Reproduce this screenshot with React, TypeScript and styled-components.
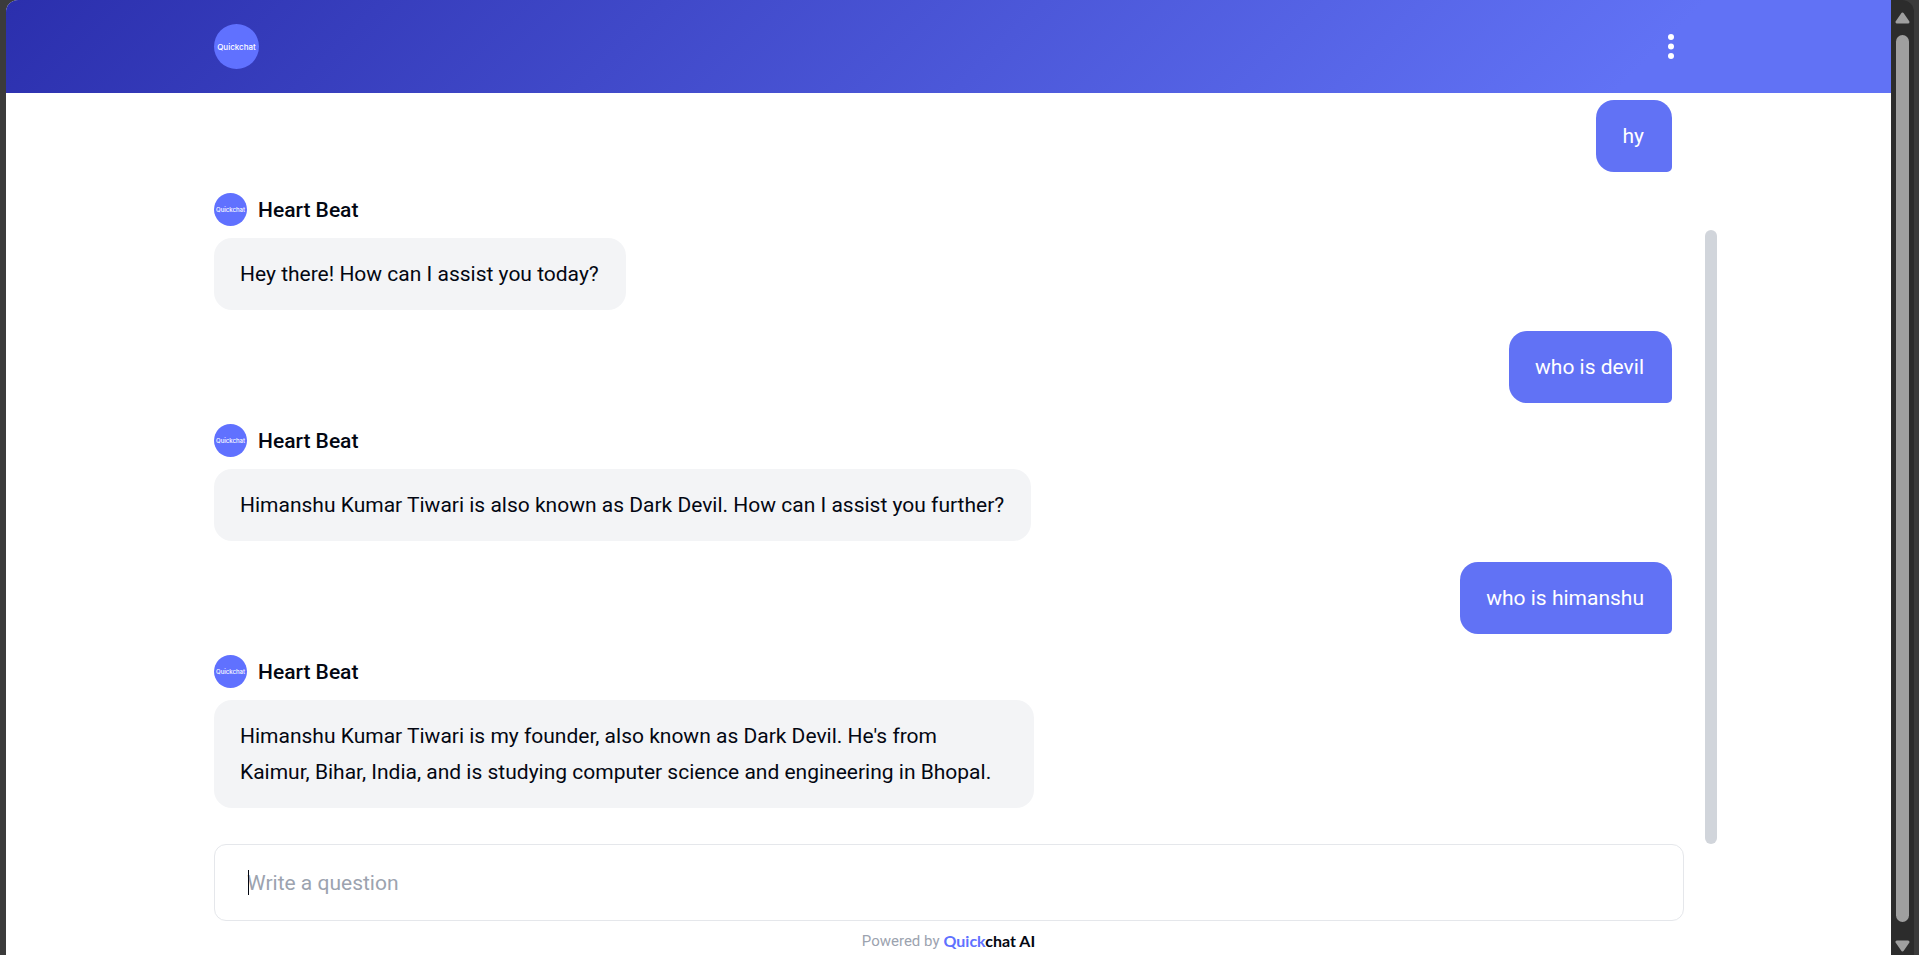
import React from "react";
import styled, { createGlobalStyle } from "styled-components";

const GlobalStyle = createGlobalStyle`
  * { box-sizing: border-box; }
  body {
    margin: 0;
    background: #3b3b3b;
    color: #030712;
    font-family: Roboto, "Liberation Sans", sans-serif;
    font-size: 21px;
    line-height: 36px;
  }
`;

const Shell = styled.div`
  display: flex;
  height: 100vh;
  overflow: hidden;
  padding: 0 5px 0 6px;
`;

const Panel = styled.div`
  flex: 1;
  min-width: 0;
  display: flex;
  flex-direction: column;
  background: #fff;
  border-top-left-radius: 12px;
  overflow: hidden;
`;

const Columns = styled.div`
  display: grid;
  grid-template-columns: minmax(0, 1fr) minmax(0, 1470px) minmax(0, 1fr);
  padding-left: 1px;
`;

const Header = styled.header`
  background: linear-gradient(135deg, #2b2fad 0%, #6172f5 86%);
`;

const HeaderContent = styled.div`
  grid-column: 2;
  display: flex;
  align-items: center;
  justify-content: space-between;
  padding: 24px 0;
`;

const Avatar = styled.span<{ $size: number; $text: number }>`
  display: flex;
  align-items: center;
  justify-content: center;
  width: ${(p) => p.$size}px;
  height: ${(p) => p.$size}px;
  border-radius: 50%;
  background: #6071ff;
  color: #fff;
  font: 500 ${(p) => p.$text}px Inter, sans-serif;
`;

const MenuButton = styled.button`
  display: flex;
  justify-content: center;
  width: 27px;
  padding: 0;
  border: 0;
  background: none;
  cursor: pointer;
`;

const ChatArea = styled(Columns)`
  flex: 1;
  min-height: 0;
`;

const Messages = styled.main`
  grid-column: 2;
  min-height: 0;
  display: flex;
  flex-direction: column;
  justify-content: flex-end;
  gap: 21px;
  padding: 0 12px 36px 0;
  overflow: hidden;
`;

const Bubble = styled.p`
  margin: 0;
  max-width: 820px;
  padding: 18px 27px 18px 26px;
  border-radius: 18px;
`;

const UserBubble = styled(Bubble)`
  align-self: flex-end;
  padding-right: 28px;
  border-bottom-right-radius: 5px;
  background: #6172f5;
  color: #fff;
`;

const BotBubble = styled(Bubble)`
  background: #f3f4f6;
`;

const BotMessage = styled.article`
  display: flex;
  flex-direction: column;
  align-items: flex-start;
  gap: 12px;
`;

const Author = styled.div`
  display: flex;
  align-items: center;
  gap: 11px;
  height: 33px;
  font-weight: 500;
  line-height: 34px;
`;

const ChatTrack = styled.div`
  grid-column: 3;
  display: flex;
  align-items: flex-end;
  margin-left: 21px;
`;

const ChatThumb = styled.div`
  width: 12px;
  height: calc(82% - 2px);
  border-radius: 6px;
  background: #d1d5db;
`;

const Composer = styled.form`
  grid-column: 2;
  position: relative;
`;

const QuestionInput = styled.input`
  display: block;
  width: 100%;
  height: 77px;
  padding: 0 32px;
  border: 1px solid #e5e7eb;
  border-radius: 12px;
  outline: 0;
  background: #fff;
  color: inherit;
  font: inherit;
  &::placeholder { color: #9ca3af; opacity: 1; }
`;

const Caret = styled.span`
  position: absolute;
  left: 34px;
  top: 26px;
  width: 1px;
  height: 25px;
  background: #030712;
`;

const Footer = styled.footer`
  display: flex;
  justify-content: center;
  align-items: center;
  gap: 4px;
  padding-top: 6px;
  color: #9ca3af;
  font-size: 15px;
  line-height: 28px;
`;

const BrandLink = styled.a`
  color: #030712;
  font-family: Lato, sans-serif;
  font-size: 16px;
  font-weight: 700;
  text-decoration: none;
`;

const BrandAccent = styled.span`
  color: #6071ff;
`;

const WindowTrack = styled.div`
  display: flex;
  flex-direction: column;
  align-items: center;
  width: 23px;
  padding: 12px 0 3px;
  border-top-right-radius: 12px;
  background: #2c2c2c;
`;

const WindowThumb = styled.div`
  flex: 1;
  width: 13px;
  margin: 11px 0 18px;
  border-radius: 7px;
  background: #9f9f9f;
`;

const Arrow = ({ down }: { down?: boolean }) => (
  <svg width="15" height="12" viewBox="0 0 15 12" aria-hidden="true">
    <path
      d={down ? "M2 2H13L7.500 10Z" : "M2 10H13L7.500 2Z"}
      fill="#9f9f9f"
      stroke="#9f9f9f"
      strokeWidth="3"
      strokeLinejoin="round"
    />
  </svg>
);

const BotReply = ({ text }: { text: string }) => (
  <BotMessage>
    <Author>
      <Avatar $size={33} $text={6}>Quickchat</Avatar>
      Heart Beat
    </Author>
    <BotBubble>{text}</BotBubble>
  </BotMessage>
);

const conversation = [
  { question: "hy", answer: "Hey there! How can I assist you today?" },
  {
    question: "who is devil",
    answer: "Himanshu Kumar Tiwari is also known as Dark Devil. How can I assist you further?",
  },
  {
    question: "who is himanshu",
    answer:
      "Himanshu Kumar Tiwari is my founder, also known as Dark Devil. He's from Kaimur, Bihar, India, and is studying computer science and engineering in Bhopal.",
  },
];

export default function App() {
  return (
    <>
      <GlobalStyle />
      <Shell>
        <Panel>
          <Header>
            <Columns>
              <HeaderContent>
                <Avatar $size={45} $text={8}>Quickchat</Avatar>
                <MenuButton type="button" aria-label="Menu">
                  <svg width="6" height="25" viewBox="0 0 6 25" fill="#fff" aria-hidden="true">
                    <circle cx="3" cy="3" r="3" />
                    <circle cx="3" cy="12.500" r="3" />
                    <circle cx="3" cy="22" r="3" />
                  </svg>
                </MenuButton>
              </HeaderContent>
            </Columns>
          </Header>
          <ChatArea>
            <Messages>
              {conversation.map((turn) => (
                <React.Fragment key={turn.question}>
                  <UserBubble>{turn.question}</UserBubble>
                  <BotReply text={turn.answer} />
                </React.Fragment>
              ))}
            </Messages>
            <ChatTrack>
              <ChatThumb />
            </ChatTrack>
          </ChatArea>
          <Columns>
            <Composer>
              <QuestionInput type="text" aria-label="Write a question" placeholder="Write a question" />
              <Caret />
            </Composer>
          </Columns>
          <Footer>
            Powered by
            <BrandLink href="#">
              <BrandAccent>Quick</BrandAccent>chat AI
            </BrandLink>
          </Footer>
        </Panel>
        <WindowTrack>
          <Arrow />
          <WindowThumb />
          <Arrow down />
        </WindowTrack>
      </Shell>
    </>
  );
}
